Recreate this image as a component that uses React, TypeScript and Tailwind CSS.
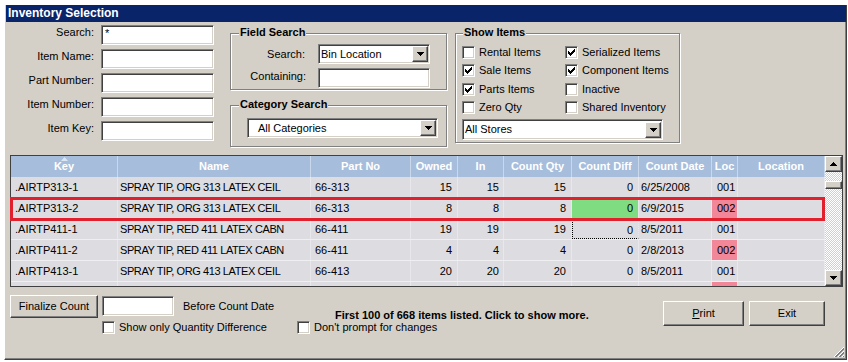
import React from "react";

const sunken =
  "bg-white border border-t-[#808080] border-l-[#808080] border-r-white border-b-white shadow-[inset_1px_1px_0_#404040,inset_-1px_-1px_0_#d4d0c8]";
const raised =
  "bg-[#d4d0c8] border border-t-white border-l-white border-r-[#404040] border-b-[#404040] shadow-[inset_-1px_-1px_0_#808080]";

function DownArrow() {
  return (
    <svg width="7" height="4" viewBox="0 0 7 4" shapeRendering="crispEdges">
      <rect x="0" y="0" width="7" height="1" fill="#000" />
      <rect x="1" y="1" width="5" height="1" fill="#000" />
      <rect x="2" y="2" width="3" height="1" fill="#000" />
      <rect x="3" y="3" width="1" height="1" fill="#000" />
    </svg>
  );
}

function UpArrow() {
  return (
    <svg width="7" height="4" viewBox="0 0 7 4" shapeRendering="crispEdges">
      <rect x="3" y="0" width="1" height="1" fill="#000" />
      <rect x="2" y="1" width="3" height="1" fill="#000" />
      <rect x="1" y="2" width="5" height="1" fill="#000" />
      <rect x="0" y="3" width="7" height="1" fill="#000" />
    </svg>
  );
}

function Combo({
  text,
  className,
  textClass,
}: {
  text: string;
  className: string;
  textClass: string;
}) {
  return (
    <div className={`${sunken} ${className} flex items-center`}>
      <span className={`flex-1 ${textClass} leading-[13px] whitespace-nowrap`}>{text}</span>
      <div className={`${raised} w-[16px] h-[16px] m-[1px] flex items-center justify-center shrink-0`}>
        <DownArrow />
      </div>
    </div>
  );
}

function Check({ checked = false }: { checked?: boolean }) {
  return (
    <div className={`${sunken} w-[13px] h-[13px] shrink-0`}>
      {checked && (
        <svg width="11" height="11" viewBox="0 0 11 11" shapeRendering="crispEdges">
          <rect x="2" y="4" width="1" height="3" fill="#000" />
          <rect x="3" y="5" width="1" height="3" fill="#000" />
          <rect x="4" y="6" width="1" height="3" fill="#000" />
          <rect x="5" y="5" width="1" height="3" fill="#000" />
          <rect x="6" y="4" width="1" height="3" fill="#000" />
          <rect x="7" y="3" width="1" height="3" fill="#000" />
          <rect x="8" y="2" width="1" height="3" fill="#000" />
        </svg>
      )}
    </div>
  );
}

function CheckItem({ label, checked }: { label: string; checked?: boolean }) {
  return (
    <div className="flex items-center h-[18.5px]">
      <Check checked={checked} />
      <span className="ml-[4px] whitespace-nowrap leading-[13px]">{label}</span>
    </div>
  );
}

const headers = [
  "Key",
  "Name",
  "Part No",
  "Owned",
  "In",
  "Count Qty",
  "Count Diff",
  "Count Date",
  "Loc",
  "Location",
];

const widths = [
  "w-[107px]",
  "w-[193px]",
  "w-[100px]",
  "w-[47px]",
  "w-[46px]",
  "w-[68px]",
  "w-[67px]",
  "w-[73px]",
  "w-[26px]",
  "w-[87px]",
];

const cellText = [
  "pl-[4px] text-left",
  "pl-[2px] text-left tracking-[-0.4px]",
  "pl-[4px] text-left",
  "pr-[5px] text-right",
  "pr-[4px] text-right",
  "pr-[5px] text-right",
  "pr-[5px] text-right",
  "pl-[2px] text-left",
  "pl-[5px] text-left",
  "text-left",
];

const rows = [
  [".AIRTP313-1", "SPRAY TIP, ORG 313 LATEX CEIL", "66-313", "15", "15", "15", "0", "6/25/2008", "001", ""],
  [".AIRTP313-2", "SPRAY TIP, ORG 313 LATEX CEIL", "66-313", "8", "8", "8", "0", "6/9/2015", "002", ""],
  [".AIRTP411-1", "SPRAY TIP, RED 411 LATEX CABN", "66-411", "19", "19", "19", "0", "8/5/2011", "001", ""],
  [".AIRTP411-2", "SPRAY TIP, RED 411 LATEX CABN", "66-411", "4", "4", "4", "0", "2/8/2013", "002", ""],
  [".AIRTP413-1", "SPRAY TIP, ORG 413 LATEX CEIL", "66-413", "20", "20", "20", "0", "8/5/2011", "001", ""],
  ["", "", "", "", "", "", "", "", "", ""],
];

const pinkRows = [1, 3, 5];

function cellBg(r: number, c: number) {
  if (r === 1 && c === 6) return "bg-[#80dc80]";
  if (c === 8 && pinkRows.includes(r)) return "bg-[#f2879a]";
  return "";
}

export default function App() {
  return (
    <div className="w-[848px] h-[362px] bg-white pt-[5px] pl-[4px] font-['Liberation_Sans',Arial,sans-serif] text-[11px] text-black overflow-hidden">
      <div className="relative w-[843px] h-[355px] bg-[#d4d0c8] border-l border-l-white border-r border-r-[#404040] border-b border-b-[#404040] shadow-[inset_-1px_-1px_0_#808080] flex flex-col">
        {/* Title bar */}
        <div className="h-[17px] ml-[1px] bg-[#0a246a] text-white font-bold text-[12px] leading-[17px] pl-[2px] shrink-0">
          Inventory Selection
        </div>

        {/* Top section */}
        <div className="flex h-[133px] shrink-0">
          {/* Left search fields */}
          <div className="flex flex-col gap-[4px] mt-[3px]">
            {["Search:", "Item Name:", "Part Number:", "Item Number:", "Item Key:"].map((l, i) => (
              <div key={l} className="flex items-center h-[20px]">
                <span className="w-[89px] text-right whitespace-nowrap leading-[13px] mb-[5px]">{l}</span>
                <div className={`${sunken} w-[113px] h-[20px] ml-[7px] pl-[3px] leading-[15px]`}>
                  {i === 0 ? "*" : ""}
                </div>
              </div>
            ))}
          </div>

          {/* Middle column */}
          <div className="flex flex-col ml-[16px] mt-[11px] w-[217px]">
            <div className="relative w-[217px] h-[57px] border border-[#808080] shadow-[inset_1px_1px_0_white,1px_1px_0_white] pt-[10px]">
              <span className="absolute top-[-8px] left-[8px] px-[1px] bg-[#d4d0c8] font-bold leading-[13px]">
                Field Search
              </span>
              <div className="flex items-center h-[20px]">
                <span className="w-[74px] text-right">Search:</span>
                <Combo text="Bin Location" className="ml-[13px] w-[112px] h-[20px]" textClass="pl-[2px]" />
              </div>
              <div className="flex items-center h-[20px] mt-[4px]">
                <span className="w-[75px] text-right leading-[13px] mb-[3px]">Containing:</span>
                <div className={`${sunken} ml-[12px] w-[112px] h-[20px]`} />
              </div>
            </div>
            <div className="relative w-[217px] h-[42px] mt-[15px] border border-[#808080] shadow-[inset_1px_1px_0_white,1px_1px_0_white] pt-[12px] pl-[16px]">
              <span className="absolute top-[-8px] left-[8px] px-[1px] bg-[#d4d0c8] font-bold leading-[13px]">
                Category Search
              </span>
              <Combo text="All Categories" className="w-[191px] h-[20px]" textClass="pl-[10px]" />
            </div>
          </div>

          {/* Right column */}
          <div className="relative ml-[8px] mt-[11px] w-[225px] h-[110px] border border-[#808080] shadow-[inset_1px_1px_0_white,1px_1px_0_white] pt-[9px] pl-[6px]">
            <span className="absolute top-[-8px] left-[7px] px-[1px] bg-[#d4d0c8] font-bold leading-[13px]">
              Show Items
            </span>
            <div className="flex">
              <div className="flex flex-col w-[103px]">
                <CheckItem label="Rental Items" />
                <CheckItem label="Sale Items" checked />
                <CheckItem label="Parts Items" checked />
                <CheckItem label="Zero Qty" />
              </div>
              <div className="flex flex-col">
                <CheckItem label="Serialized Items" checked />
                <CheckItem label="Component Items" checked />
                <CheckItem label="Inactive" />
                <CheckItem label="Shared Inventory" />
              </div>
            </div>
            <Combo text="All Stores" className="mt-[2px] w-[201px] h-[21px]" textClass="pl-[2px]" />
          </div>
        </div>

        {/* Grid */}
        <div className="relative ml-[5px] w-[833px] h-[132px] border border-[#404040] flex shrink-0">
          <div className="w-[814px] h-[130px] overflow-hidden flex flex-col">
            <div className="flex h-[21px] bg-[#a6bddb] shrink-0">
              {headers.map((h, i) => (
                <div
                  key={h}
                  className={`${widths[i]} relative h-full flex items-center justify-center border-r border-r-[#c9d8ea] text-white font-bold whitespace-nowrap`}
                >
                  {i === 0 && (
                    <svg className="absolute top-[1px] left-[50px]" width="7" height="4" viewBox="0 0 7 4">
                      <path d="M3.5 0 L7 4 L0 4 Z" fill="#dbe6f2" />
                    </svg>
                  )}
                  {h}
                </div>
              ))}
            </div>
            {rows.map((row, r) => (
              <div key={r} className="flex h-[21px] shrink-0 bg-[#dddce1] border-b border-b-[#efeff1]">
                {row.map((v, c) => (
                  <div
                    key={c}
                    className={`${widths[c]} ${cellText[c]} ${cellBg(r, c)} h-full leading-[20px] border-r border-r-[#e8e8ec] whitespace-nowrap overflow-hidden ${
                      r === 2 && c === 6 ? "border border-dotted border-black leading-[18px]" : ""
                    }`}
                  >
                    {v}
                  </div>
                ))}
              </div>
            ))}
          </div>
          {/* Scrollbar */}
          <div className="w-[17px] h-[130px] flex flex-col [background-image:repeating-conic-gradient(#ffffff_0_25%,#d4d0c8_0_50%)] [background-size:2px_2px]">
            <div className={`${raised} w-[17px] h-[16px] flex items-center justify-center shrink-0`}>
              <UpArrow />
            </div>
            <div className={`${raised} w-[17px] h-[8px] mt-[9px] shrink-0`} />
            <div className="flex-1" />
            <div className={`${raised} w-[17px] h-[16px] flex items-center justify-center shrink-0`}>
              <DownArrow />
            </div>
          </div>
          {/* Highlight box */}
          <div className="absolute left-[-1px] top-[41px] w-[815px] h-[24px] border-[3px] border-[#e0202c]" />
        </div>

        {/* Bottom section */}
        <div className="flex mt-[8px] ml-[5px]">
          <div className="flex flex-col">
            <div className="flex h-[23px] items-start">
              <div className={`${raised} w-[88px] h-[23px] flex items-center justify-center shrink-0`}>
                Finalize Count
              </div>
              <div className={`${sunken} w-[72px] h-[20px] ml-[4px] mt-[1px] shrink-0`} />
              <span className="ml-[9px] mt-[5px] w-[152px] leading-[13px] whitespace-nowrap shrink-0">
                Before Count Date
              </span>
              <span className="mt-[14px] font-bold leading-[13px] whitespace-nowrap">
                First 100 of 668 items listed. Click to show more.
              </span>
            </div>
            <div className="flex items-center h-[13px] mt-[3px] ml-[92px]">
              <Check />
              <span className="ml-[4px] w-[178px] leading-[13px] whitespace-nowrap">
                Show only Quantity Difference
              </span>
              <Check />
              <span className="ml-[4px] leading-[13px] whitespace-nowrap">Don't prompt for changes</span>
            </div>
          </div>
          <div className="flex ml-auto mr-[21px] mt-[6px] gap-[5px]">
            <div className={`${raised} w-[81px] h-[25px] flex items-center justify-center`}>
              <span>
                <span className="underline">P</span>rint
              </span>
            </div>
            <div className={`${raised} w-[76px] h-[25px] flex items-center justify-center`}>Exit</div>
          </div>
        </div>

        {/* Resize grip */}
        <svg className="absolute right-[1px] bottom-[1px]" width="12" height="12" viewBox="0 0 12 12">
          <line x1="11" y1="1" x2="1" y2="11" stroke="#ffffff" />
          <line x1="11" y1="2" x2="2" y2="11" stroke="#808080" />
          <line x1="11" y1="3" x2="3" y2="11" stroke="#808080" />
          <line x1="11" y1="5" x2="5" y2="11" stroke="#ffffff" />
          <line x1="11" y1="6" x2="6" y2="11" stroke="#808080" />
          <line x1="11" y1="7" x2="7" y2="11" stroke="#808080" />
          <line x1="11" y1="9" x2="9" y2="11" stroke="#ffffff" />
          <line x1="11" y1="10" x2="10" y2="11" stroke="#808080" />
        </svg>
      </div>
    </div>
  );
}
